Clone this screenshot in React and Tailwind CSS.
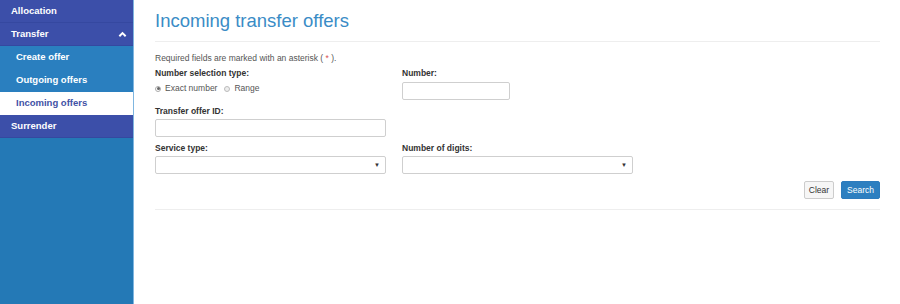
import { useState } from 'react'

const NAV = [
  { id: 'allocation', label: 'Allocation', level: 0 },
  { id: 'transfer', label: 'Transfer', level: 0, open: true },
  { id: 'create', label: 'Create offer', level: 1 },
  { id: 'outgoing', label: 'Outgoing offers', level: 1 },
  { id: 'incoming', label: 'Incoming offers', level: 1 },
  { id: 'surrender', label: 'Surrender', level: 0 },
]

function NavItem({ item, active }) {
  if (active) {
    return (
      <div className="h-[23px] flex items-center pl-[16px] bg-white text-[#3f51a5] text-[9.5px] font-bold">
        {item.label}
      </div>
    )
  }
  if (item.level === 1) {
    return (
      <div className="h-[23px] flex items-center pl-[16px] bg-[#2a7fbf] text-white text-[9.5px] font-bold">
        {item.label}
      </div>
    )
  }
  return (
    <div className="h-[23px] flex items-center justify-between pl-[11px] pr-[6px] bg-[#3c4fa9] border-b border-[#3548a0] text-white text-[9.5px] font-bold">
      <span>{item.label}</span>
      {item.open && (
        <svg width="9" height="7" viewBox="0 0 10 7">
          <polyline points="1.5,5.5 5,2 8.5,5.5" fill="none" stroke="white" strokeWidth="2.2" />
        </svg>
      )}
    </div>
  )
}

function Select() {
  return (
    <div className="h-[18px] w-[231px] border border-[#cfcfcf] rounded-[2px] bg-white flex items-center justify-end pr-[5px]">
      <span className="text-[6px] text-[#333]">▼</span>
    </div>
  )
}

export default function App() {
  const [mode, setMode] = useState('exact')

  return (
    <div className="w-[900px] h-[304px] flex bg-white overflow-hidden" style={{ fontFamily: '"Liberation Sans", Arial, sans-serif' }}>
      {/* Sidebar */}
      <aside className="w-[134px] shrink-0 bg-[#2479b6] border-r border-[#7fb6e0] flex flex-col">
        {NAV.map(item => (
          <NavItem key={item.id} item={item} active={item.id === 'incoming'} />
        ))}
      </aside>

      {/* Main */}
      <main className="flex-1 pl-[21px] pr-[20px]">
        <h1 className="text-[18.5px] text-[#3a8cc6] mt-[10px] leading-[22px]">Incoming transfer offers</h1>
        <div className="mt-[9px] border-t border-[#eeeeee]" />

        <p className="mt-[11px] text-[8.5px] text-[#555] leading-[11px]">
          Required fields are marked with an asterisk ( <span className="text-[#d9534f]">*</span> ).
        </p>

        <div className="mt-[4px] grid grid-cols-[247px_1fr]">
          <div>
            <div className="text-[8.5px] font-bold text-[#333] leading-[11px]">Number selection type:</div>
            <div className="mt-[4px] flex items-center gap-[4px] text-[8.5px] text-[#555] leading-[11px]">
              <span onClick={() => setMode('exact')} className="flex items-center gap-[4px] cursor-pointer">
                <span className="w-[6px] h-[6px] rounded-full border border-[#aaa] bg-white flex items-center justify-center">
                  {mode === 'exact' && <span className="w-[3px] h-[3px] rounded-full bg-[#666]" />}
                </span>
                Exact number
              </span>
              <span onClick={() => setMode('range')} className="ml-[3px] flex items-center gap-[4px] cursor-pointer">
                <span className="w-[6px] h-[6px] rounded-full border border-[#bbb] bg-[#eee] flex items-center justify-center">
                  {mode === 'range' && <span className="w-[3px] h-[3px] rounded-full bg-[#666]" />}
                </span>
                Range
              </span>
            </div>
          </div>
          <div>
            <div className="text-[8.5px] font-bold text-[#333] leading-[11px]">Number:</div>
            <div className="mt-[3px] h-[18px] w-[108px] border border-[#cfcfcf] rounded-[2px]" />
          </div>
        </div>

        <div className="mt-[6px]">
          <div className="text-[8.5px] font-bold text-[#333] leading-[11px]">Transfer offer ID:</div>
          <div className="mt-[2px] h-[18px] w-[231px] border border-[#cfcfcf] rounded-[2px]" />
        </div>

        <div className="mt-[6px] grid grid-cols-[247px_1fr]">
          <div>
            <div className="text-[8.5px] font-bold text-[#333] leading-[11px]">Service type:</div>
            <div className="mt-[2px]"><Select /></div>
          </div>
          <div>
            <div className="text-[8.5px] font-bold text-[#333] leading-[11px]">Number of digits:</div>
            <div className="mt-[2px]"><Select /></div>
          </div>
        </div>

        <div className="mt-[7px] flex justify-end gap-[7px]">
          <button className="h-[18px] px-[4px] border border-[#cccccc] rounded-[2px] bg-[#f6f6f6] text-[8.5px] text-[#333]">Clear</button>
          <button className="h-[18px] px-[5px] border border-[#2d7bbd] rounded-[2px] bg-[#2d7fc0] text-[8.5px] text-white">Search</button>
        </div>

        <div className="mt-[10px] border-t border-[#eeeeee]" />
      </main>
    </div>
  )
}
